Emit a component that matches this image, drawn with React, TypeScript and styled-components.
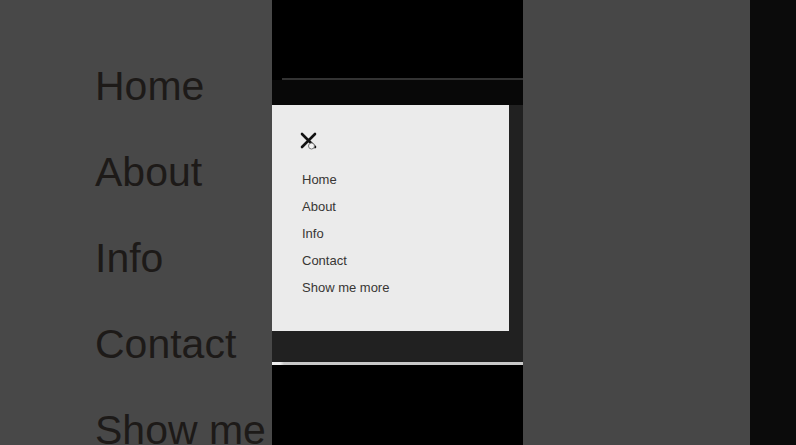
import React from 'react';
import styled, { createGlobalStyle } from 'styled-components';

const bigLinks = ['Home', 'About', 'Info', 'Contact', 'Show me more'];
const menuLinks = ['Home', 'About', 'Info', 'Contact', 'Show me more'];

const App: React.FC = () => {
  return (
    <>
      <GlobalStyle />
      <Stage>
        <BackdropPane>
          <BigNav>
            {bigLinks.map((link) => (
              <BigLink key={link}>{link}</BigLink>
            ))}
          </BigNav>
        </BackdropPane>

        <VideoColumn>
          <TopGap />
          <Divider />
          <Screen>
            <ScreenBar />
            <ScreenBody>
              <Drawer>
                <CloseButton aria-label="Close menu">
                  <svg width="18" height="18" viewBox="0 0 18 18">
                    <path d="M2 2 L15 15 M15 2 L2 15" stroke="#111" strokeWidth="2.6" strokeLinecap="round" />
                    <circle cx="11.5" cy="14" r="3" fill="#f4f4f4" stroke="#777" strokeWidth="1" />
                  </svg>
                </CloseButton>
                <MenuList>
                  {menuLinks.map((link) => (
                    <MenuItem key={link}>{link}</MenuItem>
                  ))}
                </MenuList>
              </Drawer>
            </ScreenBody>
          </Screen>
          <BottomLine />
        </VideoColumn>

        <SidePane />
        <EdgePane />
      </Stage>
    </>
  );
};

export default App;

const GlobalStyle = createGlobalStyle`
  html, body {
    margin: 0;
    padding: 0;
    background: #000;
  }
`;

const Stage = styled.div`
  display: flex;
  width: 796px;
  height: 445px;
  overflow: hidden;
  font-family: 'Liberation Sans', Arial, sans-serif;
`;

const BackdropPane = styled.div`
  width: 272px;
  flex-shrink: 0;
  background-color: #484848;
  padding: 43px 0 0 95px;
  box-sizing: border-box;
  overflow: hidden;
`;

const BigNav = styled.ul`
  list-style: none;
  margin: 0;
  padding: 0;
`;

const BigLink = styled.li`
  font-size: 41px;
  line-height: 86px;
  color: #1d1a18;
  white-space: nowrap;
`;

const VideoColumn = styled.div`
  width: 251px;
  flex-shrink: 0;
  display: flex;
  flex-direction: column;
  background-color: #000;
`;

const TopGap = styled.div`
  height: 78px;
`;

const Divider = styled.div`
  height: 2px;
  margin-left: 10px;
  background-color: #333;
`;

const Screen = styled.div`
  display: flex;
  flex-direction: column;
  background-color: #212121;
  height: 282px;
`;

const ScreenBar = styled.div`
  height: 25px;
  background-color: #080808;
`;

const ScreenBody = styled.div`
  display: flex;
`;

const Drawer = styled.nav`
  width: 237px;
  height: 226px;
  background-color: #ebebeb;
  padding: 27px 0 0 28px;
  box-sizing: border-box;
`;

const CloseButton = styled.button`
  display: block;
  width: 18px;
  height: 18px;
  padding: 0;
  border: none;
  background: none;
  cursor: pointer;
  margin-bottom: 16px;
`;

const MenuList = styled.ul`
  list-style: none;
  margin: 0;
  padding: 0 0 0 2px;
`;

const MenuItem = styled.li`
  font-size: 13px;
  line-height: 27px;
  color: #383634;
`;

const BottomLine = styled.div`
  height: 3px;
  background: linear-gradient(to right, #eee 0, #eee 8px, #c9c9c9 12px, #c9c9c9 100%);
`;

const SidePane = styled.div`
  width: 227px;
  flex-shrink: 0;
  background-color: #474747;
`;

const EdgePane = styled.div`
  flex: 1;
  background-color: #0b0b0b;
`;
